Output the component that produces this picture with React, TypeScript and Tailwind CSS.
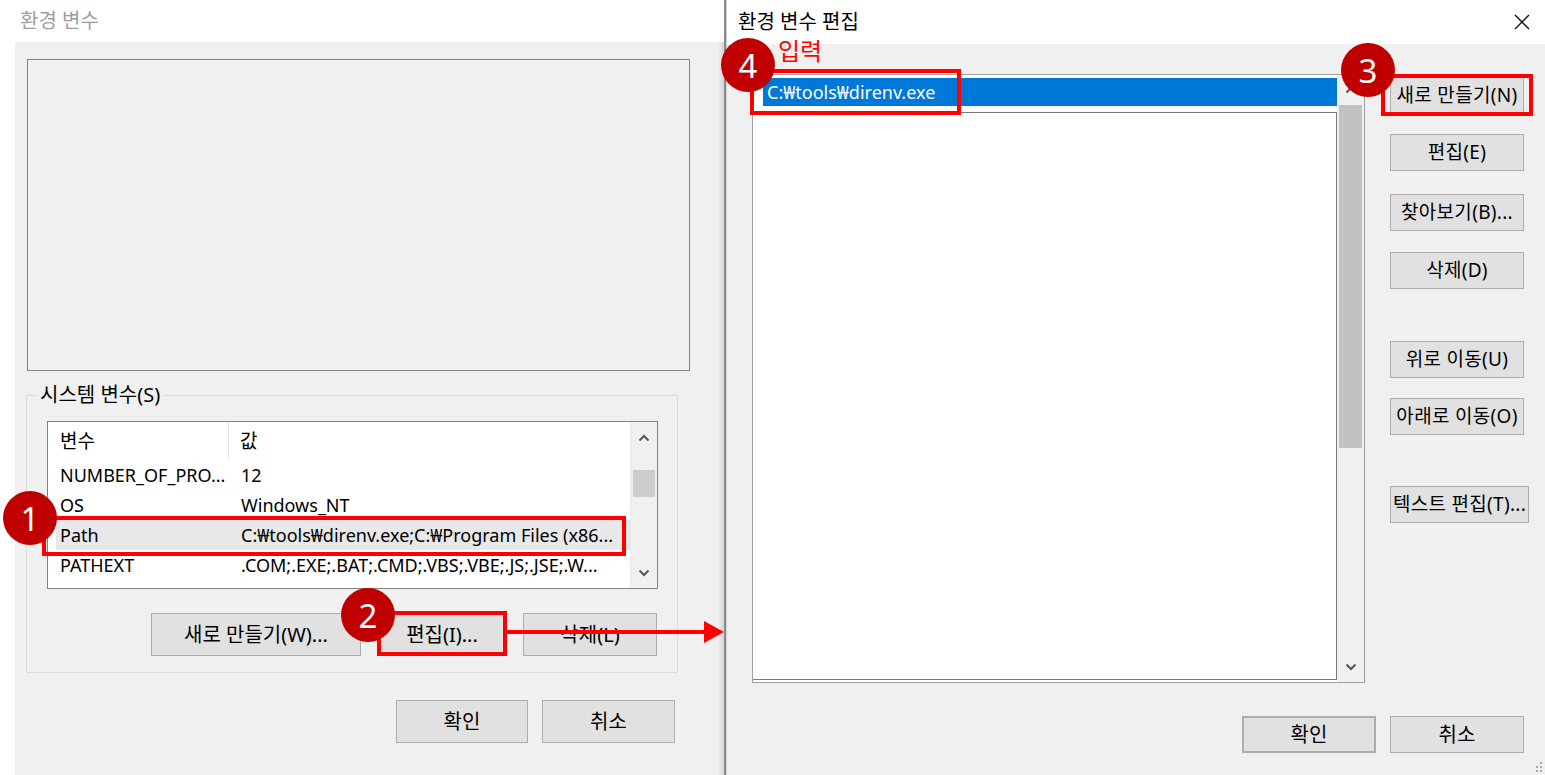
import React from 'react';

const font = "font-['Noto_Sans','Noto_Sans_CJK_KR',sans-serif]";

const Btn = ({ label, className = '' }: { label: string; className?: string }) => (
  <div className={`flex shrink-0 items-center justify-center whitespace-nowrap border border-[#adadad] bg-[#e1e1e1] text-black ${className}`}>
    {label}
  </div>
);

const Chevron = ({ up }: { up?: boolean }) => (
  <svg width="12" height="8" viewBox="0 0 12 8">
    <path d={up ? 'M1.5 6.5 L6 2 L10.5 6.5' : 'M1.5 1.5 L6 6 L10.5 1.5'} fill="none" stroke="#555" strokeWidth="2" />
  </svg>
);

const Badge = ({ n, className }: { n: number; className: string }) => (
  <div className={`absolute flex h-[54px] w-[54px] items-center justify-center rounded-full bg-[#c00000] text-[33px] leading-none text-white ${className}`}>
    {n}
  </div>
);

const rows = [
  { name: 'NUMBER_OF_PRO...', value: '12' },
  { name: 'OS', value: 'Windows_NT' },
  { name: 'Path', value: 'C:₩tools₩direnv.exe;C:₩Program Files (x86...', active: true },
  { name: 'PATHEXT', value: '.COM;.EXE;.BAT;.CMD;.VBS;.VBE;.JS;.JSE;.W...' },
];

const EnvVars = () => (
  <div className="flex w-[724px] shrink-0 flex-col">
    <div className="flex h-[42px] items-center pl-[20px] text-[20px] text-[#9d9d9d]">환경 변수</div>
    <div className="ml-[15px] flex flex-1 flex-col bg-[linear-gradient(to_right,#f0f0f0_calc(100%-6px),#d4d4d4)]">
      <div className="ml-[12px] mt-[17px] h-[312px] w-[663px] border border-[#828282]" />

      <fieldset className="ml-[11px] mt-[12px] h-[290px] w-[652px] border border-[#dcdcdc]">
        <legend className="ml-[9px] px-[4px] text-[20px] leading-[24px]">시스템 변수(S)</legend>

        <div className="ml-[20px] mt-[14px] flex h-[168px] w-[611px] border border-[#828282] bg-white text-[18px]">
          <div className="flex flex-1 flex-col">
            <div className="flex h-[38px] items-stretch text-[19px]">
              <div className="flex w-[181px] items-center border-r border-[#e5e5e5] pl-[12px]">변수</div>
              <div className="flex items-center pl-[11px]">값</div>
            </div>
            <div className="flex flex-col pl-[8px]">
              {rows.map((r) => (
                <div key={r.name} className={`flex h-[30px] items-center ${r.active ? 'bg-[#e8e8e8]' : ''}`}>
                  <div className="w-[185px] pl-[4px]">{r.name}</div>
                  <div className="whitespace-nowrap">{r.value}</div>
                </div>
              ))}
            </div>
          </div>
          <div className="flex w-[27px] flex-col items-center border-l border-[#ececec] bg-[#f0f0f0]">
            <div className="flex h-[32px] items-center">
              <Chevron up />
            </div>
            <div className="mt-[16px] h-[27px] w-[22px] bg-[#cdcdcd]" />
            <div className="flex-1" />
            <div className="flex h-[30px] items-center">
              <Chevron />
            </div>
          </div>
        </div>

        <div className="mr-[20px] mt-[24px] flex justify-end gap-[17px] text-[20px]">
          <Btn label="새로 만들기(W)..." className="h-[43px] w-[210px]" />
          <Btn label="편집(I)..." className="h-[43px] w-[128px]" />
          <Btn label="삭제(L)" className="h-[43px] w-[134px]" />
        </div>
      </fieldset>

      <div className="mr-[49px] mt-[27px] flex justify-end gap-[14px] text-[20px]">
        <Btn label="확인" className="h-[43px] w-[132px]" />
        <Btn label="취소" className="h-[43px] w-[133px]" />
      </div>
    </div>
  </div>
);

const EditDialog = () => (
  <div className="flex flex-1 flex-col">
    <div className="flex h-[44px] items-center justify-between pl-[11px] pr-[15px] text-[20px] text-black">
      <span>환경 변수 편집</span>
      <svg width="16" height="16" viewBox="0 0 16 16">
        <path d="M1 1 L15 15 M15 1 L1 15" stroke="#111" strokeWidth="1.4" />
      </svg>
    </div>
    <div className="relative flex flex-1 flex-col bg-[#f0f0f0]">
      <div className="ml-[25px] mt-[30px] flex items-start">
        <div className="flex h-[609px] w-[613px] border border-[#a0a0a0] bg-white">
          <div className="flex flex-1 flex-col">
            <div className="h-[37px] pl-[10px] pt-[3px]">
              <div className="flex h-[28px] items-center bg-[#0078d7] pl-[4px] text-[18px] text-white">C:₩tools₩direnv.exe</div>
            </div>
            <div className="mb-[2px] flex-1 border-b border-r border-t border-[#7a7a7a] bg-white" />
          </div>
          <div className="flex w-[27px] flex-col items-center bg-[#f0f0f0]">
            <div className="flex h-[30px] items-center">
              <Chevron up />
            </div>
            <div className="h-[343px] w-[23px] bg-[#c2c2c2]" />
            <div className="flex-1" />
            <div className="flex h-[30px] items-center">
              <Chevron />
            </div>
          </div>
        </div>

        <div className="ml-[25px] flex flex-col text-[19px] tracking-[0.3px]">
          <Btn label="새로 만들기(N)" className="mt-[3px] h-[37px] w-[134px]" />
          <Btn label="편집(E)" className="mt-[20px] h-[37px] w-[134px]" />
          <Btn label="찾아보기(B)..." className="mt-[23px] h-[37px] w-[134px]" />
          <Btn label="삭제(D)" className="mt-[21px] h-[37px] w-[134px]" />
          <Btn label="위로 이동(U)" className="mt-[52px] h-[37px] w-[134px]" />
          <Btn label="아래로 이동(O)" className="mt-[20px] h-[37px] w-[134px]" />
          <Btn label="텍스트 편집(T)..." className="mt-[51px] h-[37px] w-[139px]" />
        </div>
      </div>

      <div className="mr-[21px] mt-[33px] flex justify-end gap-[14px] text-[20px]">
        <Btn label="확인" className="h-[37px] w-[134px] border-2 border-[#0078d7]" />
        <Btn label="취소" className="h-[37px] w-[134px]" />
      </div>

      <svg className="absolute bottom-[2px] right-[2px]" width="10" height="12" viewBox="0 0 10 12">
        <g fill="#a8a8a8">
          <rect x="7" y="1" width="2" height="2" />
          <rect x="7" y="5" width="2" height="2" />
          <rect x="3" y="5" width="2" height="2" />
          <rect x="7" y="9" width="2" height="2" />
          <rect x="3" y="9" width="2" height="2" />
        </g>
      </svg>
    </div>
  </div>
);

export default function App() {
  return (
    <div className={`relative flex h-[775px] w-[1545px] overflow-hidden bg-white text-black ${font}`}>
      <EnvVars />
      <div className="w-[2px] shrink-0 bg-[#8a8a8a]" />
      <div className="w-[1px] shrink-0 bg-[#cfcfcf]" />
      <EditDialog />

      {/* annotations */}
      <div className="absolute left-[42px] top-[516px] h-[40px] w-[584px] border-4 border-[#ff0000]" />
      <div className="absolute left-[377px] top-[611px] h-[45px] w-[130px] border-4 border-[#ff0000]" />
      <div className="absolute left-[1381px] top-[74px] h-[42px] w-[152px] border-4 border-[#ff0000]" />
      <div className="absolute left-[750px] top-[69px] h-[46px] w-[211px] border-4 border-[#ff0000]" />
      <svg className="absolute left-[504px] top-[620px]" width="222" height="24" viewBox="0 0 222 24">
        <path d="M0 12 H202" stroke="#ff0000" strokeWidth="4" />
        <path d="M200 1 L220 12 L200 23 Z" fill="#ff0000" />
      </svg>
      <div className="absolute left-[778px] top-[35px] text-[24px] leading-[32px] text-[#ff0000]">입력</div>
      <Badge n={1} className="left-[3px] top-[491px]" />
      <Badge n={2} className="left-[341px] top-[588px]" />
      <Badge n={3} className="left-[1341px] top-[43px]" />
      <Badge n={4} className="left-[721px] top-[38px]" />
    </div>
  );
}
